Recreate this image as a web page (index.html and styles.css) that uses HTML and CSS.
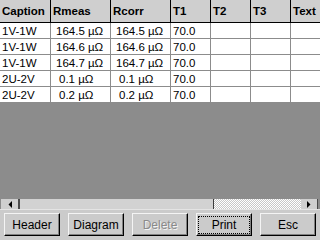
FILE: index.html
```html
<!DOCTYPE html>
<html>
<head>
<meta charset="utf-8">
<link rel="stylesheet" href="styles.css">
</head>
<body>
<div class="screen">
  <div class="gridarea">
    <div class="grid">
      <div class="hd">Caption</div><div class="hd">Rmeas</div><div class="hd">Rcorr</div><div class="hd">T1</div><div class="hd">T2</div><div class="hd">T3</div><div class="hd">Text</div>

      <div class="c">1V-1W</div><div class="c v">164.5 µΩ</div><div class="c v">164.5 µΩ</div><div class="c">70.0</div><div class="c"></div><div class="c"></div><div class="c"></div>
      <div class="c">1V-1W</div><div class="c v">164.6 µΩ</div><div class="c v">164.6 µΩ</div><div class="c">70.0</div><div class="c"></div><div class="c"></div><div class="c"></div>
      <div class="c">1V-1W</div><div class="c v">164.7 µΩ</div><div class="c v">164.7 µΩ</div><div class="c">70.0</div><div class="c"></div><div class="c"></div><div class="c"></div>
      <div class="c">2U-2V</div><div class="c v s">0.1 µΩ</div><div class="c v s">0.1 µΩ</div><div class="c">70.0</div><div class="c"></div><div class="c"></div><div class="c"></div>
      <div class="c">2U-2V</div><div class="c v s">0.2 µΩ</div><div class="c v s">0.2 µΩ</div><div class="c">70.0</div><div class="c"></div><div class="c"></div><div class="c"></div>
    </div>
  </div>
  <div class="hscroll">
    <div class="arrow left"><svg width="4" height="7" viewBox="0 0 4 7"><polygon points="4,0 4,7 0.5,3.5" fill="#000"/></svg></div>
    <div class="thumb"></div>
    <div class="track"></div>
    <div class="arrow right"><svg width="4" height="7" viewBox="0 0 4 7"><polygon points="0,0 0,7 3.5,3.5" fill="#000"/></svg></div>
  </div>
  <div class="buttons">
    <div class="btn">Header</div>
    <div class="btn">Diagram</div>
    <div class="btn disabled">Delete</div>
    <div class="btn focus">Print</div>
    <div class="btn">Esc</div>
  </div>
</div>
</body>
</html>
```
FILE: styles.css
```css
html, body {
  margin: 0;
  padding: 0;
}
body {
  font-family: "Liberation Sans", Arial, sans-serif;
  font-size: 11.5px;
  color: #000;
}
.screen {
  width: 320px;
  height: 240px;
  display: flex;
  flex-direction: column;
  overflow: hidden;
  background: #8c8c8c;
}
.gridarea {
  height: 199px;
  overflow: hidden;
  background: #8c8c8c;
}
.grid {
  display: grid;
  grid-template-columns: 51px 60px 60px 40px 40px 40px 60px;
  grid-template-rows: 23px repeat(5, 16px);
  width: 311px;
}
.hd {
  box-sizing: border-box;
  background: #cfcfcf;
  border-right: 1px solid #000;
  border-bottom: 1px solid #000;
  font-weight: bold;
  padding: 4px 0 0 2px;
  line-height: 14px;
  white-space: nowrap;
  overflow: hidden;
}
.c {
  box-sizing: border-box;
  background: #fff;
  border-right: 1px solid #8c8c8c;
  border-bottom: 1px solid #8c8c8c;
  padding: 1px 0 0 2px;
  line-height: 14px;
  white-space: nowrap;
  overflow: hidden;
}
.c.v {
  padding-left: 5px;
}
.c.v.s {
  padding-left: 8px;
}
.hscroll {
  height: 10px;
  display: flex;
  padding: 0 2px 0 1px;
  background: #8c8c8c;
}
.arrow {
  width: 17px;
  background: #cfcfcf;
  display: flex;
  align-items: center;
  justify-content: center;
}
.arrow.left {
  border-right: 2px solid #4a4a4a;
}
.arrow.right {
  width: 16px;
  border-right: 1px solid #4a4a4a;
}
.thumb {
  width: 193px;
  background: #d2d2d2;
  border-right: 1px solid #3c3c3c;
}
.track {
  flex: 1;
  background-color: #e6e6e6;
  background-image: repeating-conic-gradient(#ffffff 0 25%, #c8c8c8 0 50%);
  background-size: 2px 2px;
}
.buttons {
  flex: 1;
  background: #cbcbcb;
  border-top: 1px solid #e4e4e4;
  display: flex;
  gap: 8px;
  padding: 3px 4px 0 4px;
  align-items: flex-start;
}
.btn {
  position: relative;
  box-sizing: border-box;
  width: 56px;
  height: 23px;
  background: #cbcbcb;
  border-top: 1px solid #f4f4f4;
  border-left: 1px solid #f4f4f4;
  border-right: 1px solid #000;
  border-bottom: 1px solid #000;
  box-shadow: inset -1px -1px 0 #808080;
  display: flex;
  align-items: center;
  justify-content: center;
  font-size: 12px;
}
.btn.disabled {
  color: #8a8a8a;
  text-shadow: 1px 1px 0 #f4f4f4;
}
.btn.focus::after {
  content: "";
  position: absolute;
  left: 1px;
  top: 2px;
  right: 1px;
  bottom: 1px;
  border: 1px dotted #000;
}
```
